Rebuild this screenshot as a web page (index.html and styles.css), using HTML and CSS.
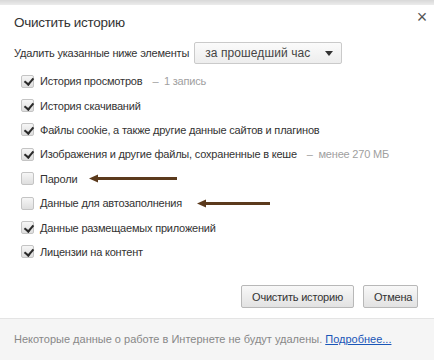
FILE: index.html
```html
<!DOCTYPE html>
<html lang="ru">
<head>
<meta charset="utf-8">
<link rel="stylesheet" href="styles.css">
</head>
<body>
<div class="backdrop"></div>
<div class="dialog">
  <div class="head">
    <div class="title">Очистить историю</div>
    <div class="close">×</div>
  </div>
  <div class="period">
    <span>Удалить указанные ниже элементы</span>
    <div class="select"><span>за прошедший час</span><svg width="8" height="5" viewBox="0 0 8 5"><path d="M0 0H8L4 5Z" fill="#333"/></svg></div>
  </div>
  <ul class="items">
    <li><span class="cb on"></span><span>История просмотров</span><span class="note">–&nbsp; 1 запись</span></li>
    <li><span class="cb on"></span><span>История скачиваний</span></li>
    <li><span class="cb on"></span><span>Файлы cookie, а также другие данные сайтов и плагинов</span></li>
    <li><span class="cb on"></span><span>Изображения и другие файлы, сохраненные в кеше</span><span class="note">–&nbsp; менее 270 МБ</span></li>
    <li><span class="cb"></span><span>Пароли</span><span class="arrow a1"><svg width="88" height="9" viewBox="0 0 88 9"><path d="M0 4.5L9 0.5V3H88V6H9V8.5Z" fill="#5b3a1c"/></svg></span></li>
    <li><span class="cb"></span><span>Данные для автозаполнения</span><span class="arrow a2"><svg width="73" height="9" viewBox="0 0 73 9"><path d="M0 4.5L9 0.5V3H73V6H9V8.5Z" fill="#5b3a1c"/></svg></span></li>
    <li><span class="cb on"></span><span>Данные размещаемых приложений</span></li>
    <li><span class="cb on"></span><span>Лицензии на контент</span></li>
  </ul>
  <div class="buttons">
    <button class="btn wide">Очистить историю</button>
    <button class="btn">Отмена</button>
  </div>
  <div class="footer">Некоторые данные о работе в Интернете не будут удалены. <a href="#">Подробнее...</a></div>
</div>
</body>
</html>
```
FILE: styles.css
```css
* { box-sizing: border-box; }
html, body { margin: 0; padding: 0; }
body {
  width: 434px;
  height: 360px;
  overflow: hidden;
  font-family: "Liberation Sans", Arial, sans-serif;
  font-size: 11px;
  letter-spacing: -0.2px;
  color: #333;
  background: #fff;
}
.backdrop {
  height: 5px;
  background: linear-gradient(#d8d8d8, #ececec);
}
.dialog {
  background: #fff;
  display: flex;
  flex-direction: column;
  height: 355px;
}
.head {
  display: flex;
  justify-content: space-between;
  align-items: flex-start;
  padding: 10px 0 0 14px;
  height: 37px;
}
.title {
  font-size: 13.5px;
  letter-spacing: -0.3px;
  line-height: 16px;
  color: #333;
}
.close {
  font-size: 18px;
  line-height: 1;
  color: #555;
  margin: -7px 7px 0 0;
}
.period {
  display: flex;
  align-items: center;
  gap: 5px;
  padding-left: 14px;
  height: 22px;
}
.select {
  width: 148px;
  height: 22px;
  border: 1px solid #cacaca;
  border-radius: 2px;
  background: linear-gradient(#fbfbfb, #ededed);
  display: flex;
  align-items: center;
  justify-content: space-between;
  padding: 0 8px 0 10px;
  font-size: 12px;
  letter-spacing: 0.1px;
  color: #444;
}
.items {
  list-style: none;
  margin: 5px 0 0;
  padding: 0 0 0 21px;
}
.items li {
  height: 24.4px;
  display: flex;
  align-items: center;
  gap: 6px;
  color: #333;
}
.cb {
  width: 13px;
  height: 13px;
  border: 1px solid #c4c4c4;
  border-radius: 2px;
  background: linear-gradient(#f6f6f6, #dedede);
  position: relative;
  flex: none;
}
.cb.on::after {
  content: "";
  position: absolute;
  left: 3.5px;
  top: 0.5px;
  width: 4px;
  height: 7px;
  border: solid #2a2a2a;
  border-width: 0 2px 2px 0;
  transform: rotate(40deg);
}
.note {
  color: #a0a0a0;
  margin-left: 4px;
}
.arrow { display: flex; align-items: center; }
.a1 { margin-left: 6px; }
.a2 { margin-left: 9px; }
.buttons {
  display: flex;
  justify-content: flex-end;
  gap: 9px;
  padding: 0 16px 0 0;
  margin-top: 21px;
  height: 33px;
}
.btn {
  height: 23px;
  font-family: inherit;
  font-size: 11px;
  letter-spacing: -0.2px;
  color: #333;
  border: 1px solid #b8b8b8;
  border-radius: 2px;
  background: linear-gradient(#f8f8f8, #e2e2e2);
  padding: 0 10px;
}
.btn.wide { width: 113px; }
.btn:not(.wide) { width: 55px; }
.footer {
  flex: 1;
  border-top: 1px solid #e4e4e4;
  background: #f5f5f5;
  padding: 14px 0 0 14px;
  font-size: 11px;
  letter-spacing: 0;
  color: #888;
}
.footer a { color: #1a56b8; }
```
